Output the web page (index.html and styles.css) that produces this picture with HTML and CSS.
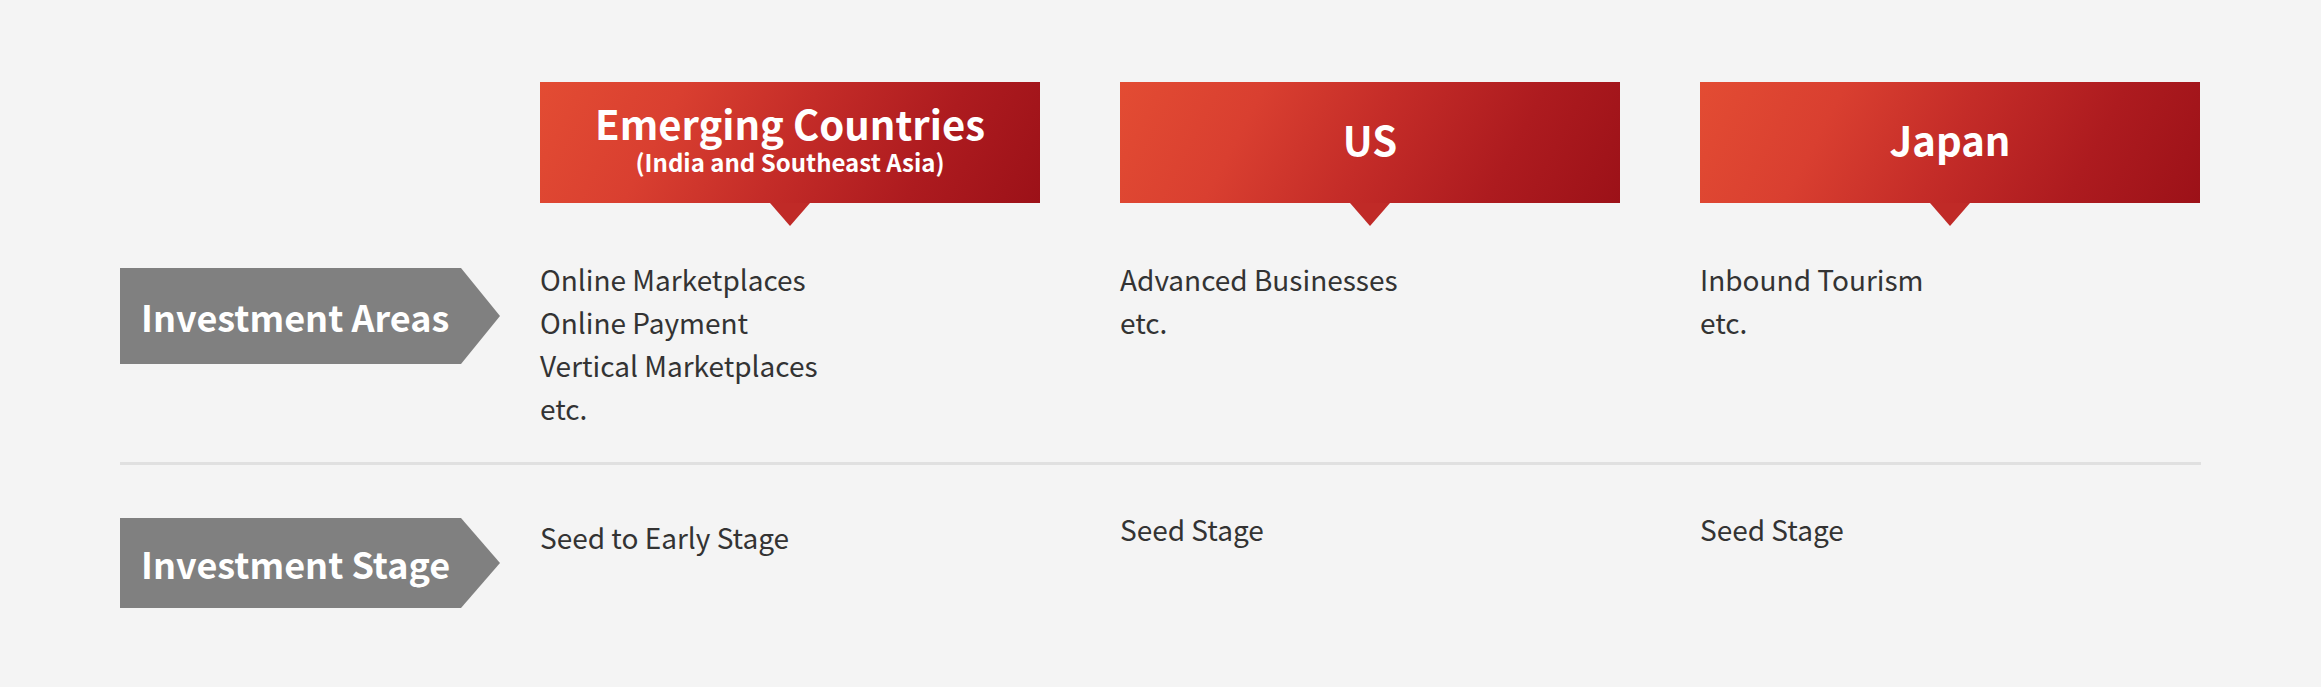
FILE: index.html
```html
<!DOCTYPE html>
<html lang="en">
<head>
<meta charset="utf-8">
<title>Investment Focus</title>
<link rel="stylesheet" href="styles.css">
</head>
<body>
<div class="wrap">
  <div class="head-row">
    <div class="label-col"></div>
    <div class="cols">
      <div class="region">
        <div class="region-inner two">
          <div class="region-title">Emerging Countries</div>
          <div class="region-sub">(India and Southeast Asia)</div>
        </div>
      </div>
      <div class="region">
        <div class="region-inner">
          <div class="region-title">US</div>
        </div>
      </div>
      <div class="region">
        <div class="region-inner">
          <div class="region-title">Japan</div>
        </div>
      </div>
    </div>
  </div>

  <div class="row row-areas">
    <div class="label-col">
      <div class="label label-areas">Investment Areas</div>
    </div>
    <div class="cols">
      <div class="cell">Online Marketplaces<br>Online Payment<br>Vertical Marketplaces<br>etc.</div>
      <div class="cell">Advanced Businesses<br>etc.</div>
      <div class="cell">Inbound Tourism<br>etc.</div>
    </div>
  </div>

  <div class="divider"></div>

  <div class="row row-stage">
    <div class="label-col">
      <div class="label label-stage">Investment Stage</div>
    </div>
    <div class="cols">
      <div class="cell cell-low">Seed to Early Stage</div>
      <div class="cell">Seed Stage</div>
      <div class="cell">Seed Stage</div>
    </div>
  </div>
</div>
</body>
</html>
```

FILE: styles.css
```css
* { box-sizing: border-box; }
html, body {
  margin: 0;
  padding: 0;
  background: #f4f4f4;
}
body {
  font-family: "Noto Sans CJK JP", "Noto Sans", sans-serif;
  color: #333333;
  width: 2321px;
  height: 687px;
  overflow: hidden;
}
.wrap {
  padding: 82px 0 0 120px;
}
.head-row, .row {
  display: flex;
  align-items: flex-start;
}
.label-col {
  width: 420px;
  flex: none;
}
.cols {
  display: flex;
  gap: 80px;
}
.region {
  position: relative;
  width: 500px;
  height: 121px;
  background: linear-gradient(118deg, #e34c33 0%, #d93f30 26%, #c42c28 50%, #ad1b1f 76%, #9c1118 100%);
}
.region::after {
  content: "";
  position: absolute;
  left: 230px;
  top: 121px;
  width: 40px;
  height: 23px;
  background: #c02a27;
  clip-path: polygon(0 0, 100% 0, 50% 100%);
}
.region-inner {
  height: 100%;
  display: flex;
  flex-direction: column;
  align-items: center;
  justify-content: center;
  color: #ffffff;
  font-weight: 700;
  padding-bottom: 8px;
}
.region-inner.two {
  justify-content: flex-start;
  padding: 19px 0 0 0;
}
.region-title {
  font-size: 40px;
  line-height: 44px;
}
.region-sub {
  font-size: 24px;
  line-height: 26px;
  margin-top: 4px;
}
.row-areas {
  margin-top: 55px;
}
.cell {
  width: 500px;
  font-size: 28px;
  line-height: 43px;
}
.label {
  margin-top: 10px;
  width: 380px;
  background: #808080;
  color: #ffffff;
  font-weight: 700;
  font-size: 36px;
  display: flex;
  align-items: center;
  padding-left: 21px;
  clip-path: polygon(0 0, 341px 0, 100% 50%, 341px 100%, 0 100%);
}
.label-areas { height: 96px; }
.label-stage { height: 90px; }
.divider {
  margin-top: 32px;
  width: 2081px;
  height: 3px;
  background: #e0e0e0;
}
.row-stage {
  padding-top: 43px;
}
.cell-low {
  padding-top: 8px;
}
```
